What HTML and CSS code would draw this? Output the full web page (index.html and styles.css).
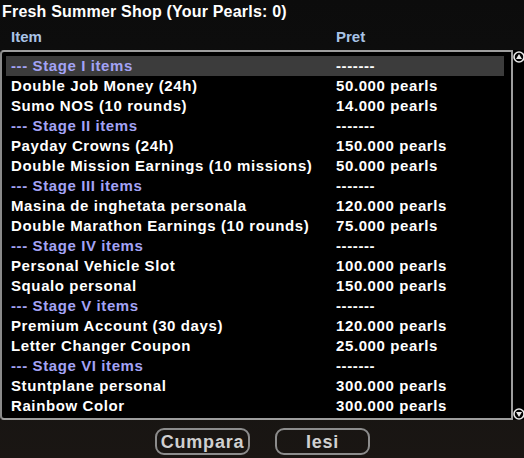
FILE: index.html
```html
<!DOCTYPE html>
<html lang="en">
<head>
    <meta charset="UTF-8">
    <title>Fresh Summer Shop</title>
    <link rel="stylesheet" href="styles.css">
</head>
<body>
    <div class="dialog">
        <div class="title">Fresh Summer Shop (Your Pearls: 0)</div>
        <div class="columns">
            <span class="col-item">Item</span>
            <span class="col-price">Pret</span>
        </div>
        <div class="list-wrap">
            <div class="list">
                <div class="row stage selected"><span class="item">--- Stage I items</span><span class="price">-------</span></div>
                <div class="row"><span class="item">Double Job Money (24h)</span><span class="price">50.000 pearls</span></div>
                <div class="row"><span class="item">Sumo NOS (10 rounds)</span><span class="price">14.000 pearls</span></div>
                <div class="row stage"><span class="item">--- Stage II items</span><span class="price">-------</span></div>
                <div class="row"><span class="item">Payday Crowns (24h)</span><span class="price">150.000 pearls</span></div>
                <div class="row"><span class="item">Double Mission Earnings (10 missions)</span><span class="price">50.000 pearls</span></div>
                <div class="row stage"><span class="item">--- Stage III items</span><span class="price">-------</span></div>
                <div class="row"><span class="item">Masina de inghetata personala</span><span class="price">120.000 pearls</span></div>
                <div class="row"><span class="item">Double Marathon Earnings (10 rounds)</span><span class="price">75.000 pearls</span></div>
                <div class="row stage"><span class="item">--- Stage IV items</span><span class="price">-------</span></div>
                <div class="row"><span class="item">Personal Vehicle Slot</span><span class="price">100.000 pearls</span></div>
                <div class="row"><span class="item">Squalo personal</span><span class="price">150.000 pearls</span></div>
                <div class="row stage"><span class="item">--- Stage V items</span><span class="price">-------</span></div>
                <div class="row"><span class="item">Premium Account (30 days)</span><span class="price">120.000 pearls</span></div>
                <div class="row"><span class="item">Letter Changer Coupon</span><span class="price">25.000 pearls</span></div>
                <div class="row stage"><span class="item">--- Stage VI items</span><span class="price">-------</span></div>
                <div class="row"><span class="item">Stuntplane personal</span><span class="price">300.000 pearls</span></div>
                <div class="row"><span class="item">Rainbow Color</span><span class="price">300.000 pearls</span></div>
            </div>
            <div class="scrollbar">
                <span class="arrow">
                    <svg width="12" height="12" viewBox="0 0 12 12"><circle cx="6" cy="6" r="5" fill="none" stroke="#e8e8e8" stroke-width="1.6"/><path d="M6 3 L9 8 L3 8 Z" fill="#e8e8e8"/></svg>
                </span>
                <span class="arrow">
                    <svg width="12" height="12" viewBox="0 0 12 12"><circle cx="6" cy="6" r="5" fill="none" stroke="#e8e8e8" stroke-width="1.6"/><path d="M3 4 L9 4 L6 9 Z" fill="#e8e8e8"/></svg>
                </span>
            </div>
        </div>
        <div class="buttons">
            <button class="btn btn-buy">Cumpara</button>
            <button class="btn btn-exit">Iesi</button>
        </div>
    </div>
</body>
</html>
```

FILE: styles.css
```css
* {
    margin: 0;
    padding: 0;
    box-sizing: border-box;
}

body {
    width: 524px;
    height: 458px;
    overflow: hidden;
    background: linear-gradient(180deg, #0c0c0c 0%, #121212 60%, #1a1613 100%);
    font-family: 'Liberation Sans', Arial, sans-serif;
    font-weight: bold;
    color: #ffffff;
}

.dialog {
    display: flex;
    flex-direction: column;
    height: 458px;
}

.title {
    height: 26px;
    padding: 3px 0 0 2px;
    font-size: 16px;
    line-height: 18px;
    letter-spacing: 0.2px;
}

.columns {
    display: flex;
    height: 24px;
    padding-top: 2px;
    font-size: 15px;
    line-height: 18px;
    color: #a9c3e6;
}

.col-item {
    width: 336px;
    padding-left: 11px;
}

/* list box + scroll arrows */
.list-wrap {
    display: flex;
    height: 370px;
}

.list {
    width: 513px;
    padding: 4px 7px 0 4px;
    border-top: 2px solid #9e9e9e;
    border-left: 2px solid #8a8a8a;
    border-right: 2px solid #9e9e9e;
    border-bottom: 2px solid #9e9e9e;
    border-top-left-radius: 4px;
    border-bottom-left-radius: 4px;
    background: #000000;
}

.row {
    display: flex;
    height: 20px;
    padding-left: 5px;
    font-size: 15px;
    line-height: 20px;
    letter-spacing: 0.6px;
    white-space: nowrap;
}

.row .item {
    width: 325px;
}

.stage .item {
    color: #a3a3f5;
}

.selected {
    background: #3c3c3c;
}

.scrollbar {
    display: flex;
    flex-direction: column;
    justify-content: space-between;
    width: 11px;
    padding: 1px 0 0 0;
    background: #000000;
}

.arrow {
    display: block;
    height: 12px;
}

.arrow svg {
    display: block;
}

.buttons {
    display: flex;
    gap: 25px;
    padding: 8px 0 0 155px;
}

.btn {
    width: 95px;
    height: 27px;
    border: 2px solid #8c8c8c;
    border-radius: 9px;
    background: transparent;
    font-family: 'Liberation Sans', Arial, sans-serif;
    font-weight: bold;
    font-size: 18px;
    line-height: 22px;
    letter-spacing: 0.8px;
    color: #d0d0d0;
    text-align: center;
}
```
